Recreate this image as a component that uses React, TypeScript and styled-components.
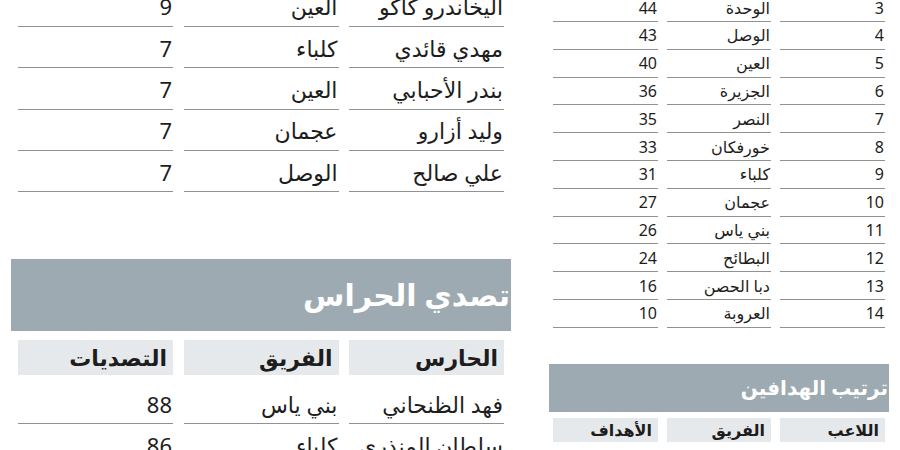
import styled, { createGlobalStyle } from 'styled-components';

const GlobalStyle = createGlobalStyle`
  html, body {
    margin: 0;
    padding: 0;
    background: #ffffff;
  }
  body {
    width: 900px;
    height: 450px;
    overflow: hidden;
    font-family: "Noto Sans", "DejaVu Sans", sans-serif;
    color: #1d1d1d;
  }
`;

type Size = 'lg' | 'sm';

const scorersTop = [
    ['اليخاندرو كاكو', 'العين', '9'],
    ['مهدي قائدي', 'كلباء', '7'],
    ['بندر الأحبابي', 'العين', '7'],
    ['وليد أزارو', 'عجمان', '7'],
    ['علي صالح', 'الوصل', '7'],
];

const keepers = [
    ['فهد الظنحاني', 'بني ياس', '88'],
    ['سلطان المنذري', 'كلباء', '86'],
];

const standings = [
    ['3', 'الوحدة', '44'],
    ['4', 'الوصل', '43'],
    ['5', 'العين', '40'],
    ['6', 'الجزيرة', '36'],
    ['7', 'النصر', '35'],
    ['8', 'خورفكان', '33'],
    ['9', 'كلباء', '31'],
    ['10', 'عجمان', '27'],
    ['11', 'بني ياس', '26'],
    ['12', 'البطائح', '24'],
    ['13', 'دبا الحصن', '16'],
    ['14', 'العروبة', '10'],
];

export default function App() {
    return (
        <>
            <GlobalStyle />
            <Page>
                <LeftColumn>
                    <Table $size='lg'>
                        {scorersTop.map((row, i) => (
                            <Row key={i} $size='lg'>
                                {row.map((cell, j) => (
                                    <Cell key={j} $size='lg'>{cell}</Cell>
                                ))}
                            </Row>
                        ))}
                    </Table>

                    <Section $size='lg'>
                        <Band $size='lg'>
                            <BandTitle $size='lg'>تصدي الحراس</BandTitle>
                        </Band>
                        <Table $size='lg'>
                            <Row $size='lg'>
                                <HeadCell $size='lg'>الحارس</HeadCell>
                                <HeadCell $size='lg'>الفريق</HeadCell>
                                <HeadCell $size='lg'>التصديات</HeadCell>
                            </Row>
                            <Rows $size='lg'>
                                {keepers.map((row, i) => (
                                    <Row key={i} $size='lg'>
                                        {row.map((cell, j) => (
                                            <Cell key={j} $size='lg'>{cell}</Cell>
                                        ))}
                                    </Row>
                                ))}
                            </Rows>
                        </Table>
                    </Section>
                </LeftColumn>

                <RightColumn>
                    <Table $size='sm'>
                        {standings.map((row, i) => (
                            <Row key={i} $size='sm'>
                                {row.map((cell, j) => (
                                    <Cell key={j} $size='sm'>{cell}</Cell>
                                ))}
                            </Row>
                        ))}
                    </Table>

                    <Section $size='sm'>
                        <Band $size='sm'>
                            <BandTitle $size='sm'>ترتيب الهدافين</BandTitle>
                        </Band>
                        <Table $size='sm'>
                            <Row $size='sm'>
                                <HeadCell $size='sm'>اللاعب</HeadCell>
                                <HeadCell $size='sm'>الفريق</HeadCell>
                                <HeadCell $size='sm'>الأهداف</HeadCell>
                            </Row>
                        </Table>
                    </Section>
                </RightColumn>
            </Page>
        </>
    );
}

const Page = styled.div`
    display: flex;
    align-items: flex-start;
    gap: 38px;
    padding-left: 11px;
`;

const LeftColumn = styled.div`
    display: flex;
    flex-direction: column;
    width: 500px;
    margin-top: -14.3px;
`;

const RightColumn = styled.div`
    display: flex;
    flex-direction: column;
    width: 340px;
    margin-top: -5.8px;
`;

const Table = styled.div.attrs({ dir: 'rtl' })<{ $size: Size }>`
    display: flex;
    flex-direction: column;
    padding: ${(p) => (p.$size === 'lg' ? '0 7px' : '0 4px')};
`;

const Rows = styled.div<{ $size: Size }>`
    display: flex;
    flex-direction: column;
    margin-top: ${(p) => (p.$size === 'lg' ? '8px' : '6px')};
`;

const Row = styled.div<{ $size: Size }>`
    display: grid;
    grid-template-columns: ${(p) => (p.$size === 'lg' ? '155px 155px 155px' : '105px 104px 105px')};
    column-gap: ${(p) => (p.$size === 'lg' ? '10.5px' : '9px')};
`;

const Cell = styled.div<{ $size: Size }>`
    display: flex;
    align-items: center;
    justify-content: flex-start;
    height: ${(p) => (p.$size === 'lg' ? '41.3px' : '27.8px')};
    box-sizing: border-box;
    padding-right: 1px;
    padding-top: ${(p) => (p.$size === 'lg' ? '1px' : '0')};
    border-bottom: 1.5px solid #929292;
    font-size: ${(p) => (p.$size === 'lg' ? '22px' : '16px')};
    white-space: nowrap;
`;

const HeadCell = styled.div<{ $size: Size }>`
    display: flex;
    align-items: center;
    justify-content: flex-start;
    height: ${(p) => (p.$size === 'lg' ? '35px' : '24px')};
    padding-right: 6px;
    background: #e6e9ec;
    font-weight: 700;
    font-size: ${(p) => (p.$size === 'lg' ? '22px' : '16px')};
    white-space: nowrap;
`;

const Section = styled.div<{ $size: Size }>`
    display: flex;
    flex-direction: column;
    gap: ${(p) => (p.$size === 'lg' ? '9px' : '6px')};
    margin-top: ${(p) => (p.$size === 'lg' ? '66.8px' : '36px')};
`;

const Band = styled.div.attrs({ dir: 'rtl' })<{ $size: Size }>`
    display: flex;
    align-items: center;
    height: ${(p) => (p.$size === 'lg' ? '72px' : '48px')};
    padding-right: 1px;
    background: #9eaab2;
`;

const BandTitle = styled.h2<{ $size: Size }>`
    margin: 0;
    color: #ffffff;
    font-weight: 700;
    font-size: ${(p) => (p.$size === 'lg' ? '30px' : '20px')};
    line-height: 1;
    white-space: nowrap;
`;
